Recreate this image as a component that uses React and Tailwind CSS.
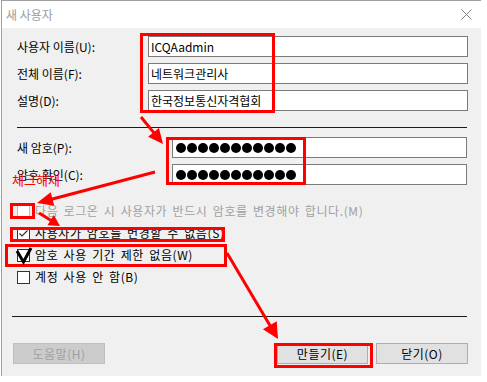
import React from 'react';

const RED = '#ff0000';

const TextRow = ({ label, value, labelWidth = 'w-[131px]', inputWidth = 'w-[320px]', children }) => (
    <div className="flex items-center h-[21px]">
        <span className={`${labelWidth} shrink-0 text-[12px] text-black leading-none`}>{label}</span>
        <div className={`${inputWidth} h-[21px] bg-white border border-[#7a7a7a] flex items-center pl-[2px] text-[12px] text-black`}>
            {value}
            {children}
        </div>
    </div>
);

const Dots = () => (
    <div className="flex gap-px pl-px pt-[1px]">
        {[...Array(11)].map((_, i) => (
            <span key={i} className="w-[10px] h-[10px] rounded-full bg-black" />
        ))}
    </div>
);

const CheckRow = ({ label, checked, disabled }) => (
    <div className="flex items-center h-[22px]">
        <span className={`w-[13px] h-[13px] shrink-0 border flex items-center justify-center ${disabled ? 'border-[#bcbcbc] bg-white' : 'border-[#333333] bg-white'}`}>
            {checked && (
                <svg width="11" height="11" viewBox="0 0 11 11">
                    <path d="M1.5 5.5 L4 8 L9.5 2.5" fill="none" stroke="#333" strokeWidth="1.2" />
                </svg>
            )}
        </span>
        <span className={`ml-[5px] text-[12px] leading-none tracking-[0.6px] [word-spacing:2px] ${disabled ? 'text-[#a0a0a0]' : 'text-black'}`}>{label}</span>
    </div>
);

const Button = ({ label, disabled, className = '' }) => (
    <div className={`h-[21px] flex items-center justify-center text-[12px] leading-none tracking-[0.5px] border ${disabled ? 'bg-[#cccccc] border-[#bfbfbf] text-[#a0a0a0]' : 'bg-[#e1e1e1] border-[#adadad] text-black'} ${className}`}>
        {label}
    </div>
);

// red annotation arrow, head computed from direction
const Arrow = ({ x1, y1, x2, y2, len = 15, half = 7 }) => {
    const dx = x2 - x1;
    const dy = y2 - y1;
    const d = Math.hypot(dx, dy);
    const ux = dx / d;
    const uy = dy / d;
    const bx = x2 - ux * len;
    const by = y2 - uy * len;
    const px = -uy * half;
    const py = ux * half;
    return (
        <g>
            <line x1={x1} y1={y1} x2={bx + ux * 2} y2={by + uy * 2} stroke={RED} strokeWidth="3" />
            <polygon points={`${x2},${y2} ${bx + px},${by + py} ${bx - px},${by - py}`} fill={RED} />
        </g>
    );
};

export default function App() {
    return (
        <div className="relative w-[487px] h-[382px] bg-white font-['Noto_Sans_CJK_KR',sans-serif] overflow-hidden">
            <div className="ml-px w-[480px] h-[376px] border-l border-t border-[#a0a0a0] flex flex-col">
                <div className="h-[27px] bg-white flex items-center justify-between pl-[4px] pr-[9px] shrink-0">
                    <span className="text-[12px] text-[#9a9a9a] leading-none">새 사용자</span>
                    <svg width="11" height="11" viewBox="0 0 11 11">
                        <path d="M0.5 0.5 L10.5 10.5 M10.5 0.5 L0.5 10.5" stroke="#808080" strokeWidth="1" />
                    </svg>
                </div>

                <div className="flex-1 bg-[#f0f0f0] pl-[10px] pt-[8px]">
                    <div className="pl-[5px] flex flex-col gap-[6px]">
                        <TextRow label="사용자 이름(U):" value="ICQAadmin" />
                        <TextRow label="전체 이름(F):" value="네트워크관리사" />
                        <TextRow label="설명(D):" value="한국정보통신자격협회" />
                    </div>

                    <div className="ml-[5px] mt-[16px] w-[450px] h-px bg-[#1a1a1a]" />

                    <div className="pl-[5px] mt-[9px] flex flex-col gap-[6px]">
                        <TextRow label="새 암호(P):" labelWidth="w-[155px]" inputWidth="w-[295px]"><Dots /></TextRow>
                        <TextRow label="암호 확인(C):" labelWidth="w-[155px]" inputWidth="w-[295px]"><Dots /></TextRow>
                    </div>

                    <div className="pl-[5px] mt-[15px] flex flex-col">
                        <CheckRow label="다음 로그온 시 사용자가 반드시 암호를 변경해야 합니다.(M)" disabled />
                        <CheckRow label="사용자가 암호를 변경할 수 없음(S)" checked />
                        <CheckRow label="암호 사용 기간 제한 없음(W)" />
                        <CheckRow label="계정 사용 안 함(B)" />
                    </div>

                    <div className="mt-[28px] w-[455px] h-px bg-[#1a1a1a]" />

                    <div className="mt-[26px] flex pl-px">
                        <Button label="도움말(H)" disabled className="w-[92px]" />
                        <Button label="만들기(E)" className="w-[91px] ml-[172px]" />
                        <Button label="닫기(O)" className="w-[92px] ml-[8px]" />
                    </div>
                </div>
            </div>

            <span className="absolute left-[12px] top-[173px] text-[13px] leading-none text-[#ff0000]">체크해제</span>

            <svg className="absolute inset-0 pointer-events-none" width="487" height="382" viewBox="0 0 487 382">
                <g fill="none" stroke={RED} strokeWidth="3">
                    <rect x="141.5" y="34.5" width="132" height="77" />
                    <rect x="167.5" y="138.5" width="137" height="45" />
                    <rect x="11.5" y="204.5" width="22" height="13" />
                    <rect x="11.5" y="228.5" width="212" height="12" />
                    <rect x="6.5" y="245.5" width="219" height="20" />
                    <rect x="275.5" y="344.5" width="96" height="22" />
                </g>
                <path d="M17 251 L23.5 262 L31 248" fill="none" stroke="#000" strokeWidth="3" />
                <Arrow x1={141} y1={117} x2={163} y2={144} />
                <Arrow x1={155} y1={172} x2={37} y2={203} len={16} />
                <Arrow x1={39} y1={213} x2={60} y2={226} len={11} half={6} />
                <Arrow x1={227} y1={253} x2={278} y2={339} len={16} half={8} />
            </svg>
        </div>
    );
}
